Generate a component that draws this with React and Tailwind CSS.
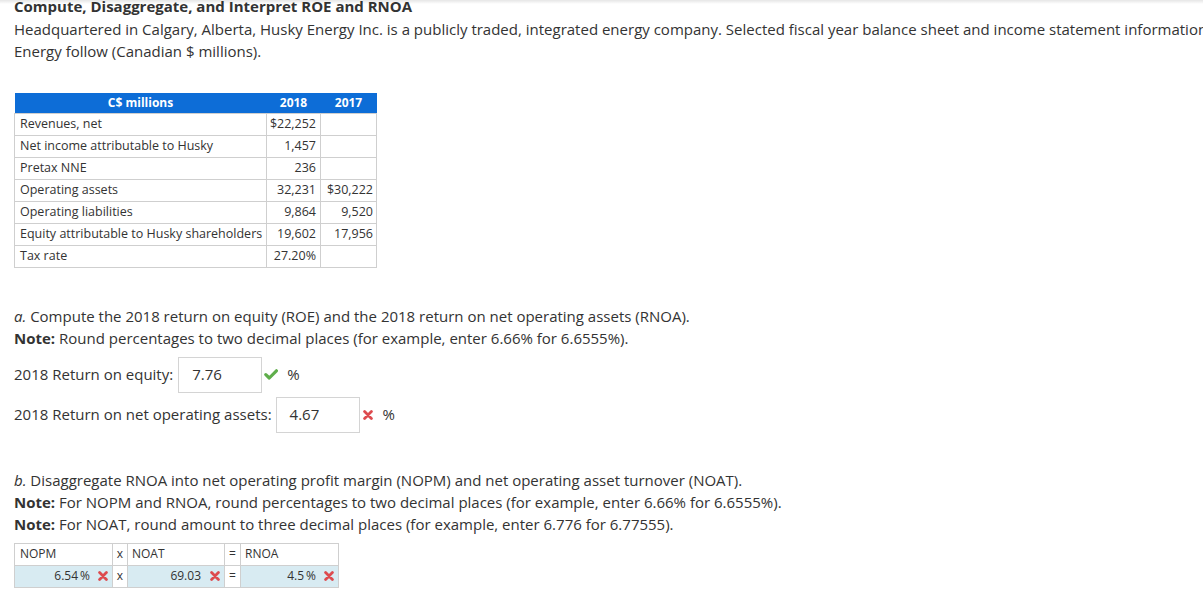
import React from 'react';

const CheckMark = () => (
    <svg width="14" height="11" viewBox="0 0 14 11" className="shrink-0">
        <polyline points="1.8,5.6 5.3,9 12.4,1.8" fill="none" stroke="#5fae4b" strokeWidth="3.2" strokeLinecap="round" strokeLinejoin="round" />
    </svg>
);

const Cross = () => (
    <svg width="10" height="10" viewBox="0 0 10 10" className="shrink-0">
        <path d="M1.6 1.6 L8.4 8.4 M8.4 1.6 L1.6 8.4" fill="none" stroke="#dd4b4f" strokeWidth="2.8" strokeLinecap="round" />
    </svg>
);

const rows = [
    ['Revenues, net', '$22,252', ''],
    ['Net income attributable to Husky', '1,457', ''],
    ['Pretax NNE', '236', ''],
    ['Operating assets', '32,231', '$30,222'],
    ['Operating liabilities', '9,864', '9,520'],
    ['Equity attributable to Husky shareholders', '19,602', '17,956'],
    ['Tax rate', '27.20%', ''],
];

const App = () => {
    return (
        <div className="relative w-full h-[589px] overflow-hidden bg-white text-[#333] font-['Open_Sans',sans-serif]">
            <div className="absolute top-0 left-0 right-0 h-[4px] bg-gradient-to-b from-black/10 to-transparent" />
            <div className="px-[14px]">
                <h1 className="-mt-[5px] text-[15px] leading-[22px] font-bold whitespace-nowrap">
                    Compute, Disaggregate, and Interpret ROE and RNOA
                </h1>
                <p className="mt-px text-[15px] leading-[22px] whitespace-nowrap">
                    Headquartered in Calgary, Alberta, Husky Energy Inc. is a publicly traded, integrated energy company. Selected fiscal year balance sheet and income statement information for Husky
                    <br />
                    Energy follow (Canadian $ millions).
                </p>

                <table className="mt-[31px] w-[362px] border-collapse text-[12.5px] table-fixed">
                    <colgroup>
                        <col className="w-[252px]" />
                        <col className="w-[54px]" />
                        <col className="w-[56px]" />
                    </colgroup>
                    <thead>
                        <tr className="h-[20px] bg-[#0d6dd7] text-white font-bold text-[12px]">
                            <th className="p-0 text-center">C$ millions</th>
                            <th className="p-0 text-center">2018</th>
                            <th className="p-0 text-center">2017</th>
                        </tr>
                    </thead>
                    <tbody>
                        {rows.map((r, i) => (
                            <tr key={i} className="h-[22px]">
                                <td className="border border-[#cfcfcf] pl-[5px] pt-px pb-0 whitespace-nowrap">{r[0]}</td>
                                <td className="border border-[#cfcfcf] pr-[4px] pt-px pb-0 text-right">{r[1]}</td>
                                <td className="border border-[#cfcfcf] pr-[3px] pt-px pb-0 text-right">{r[2]}</td>
                            </tr>
                        ))}
                    </tbody>
                </table>

                <div className="mt-[37px] text-[15px] leading-[22px]">
                    <p><i>a.</i> Compute the 2018 return on equity (ROE) and the 2018 return on net operating assets (RNOA).</p>
                    <p><b>Note:</b> Round percentages to two decimal places (for example, enter 6.66% for 6.6555%).</p>
                </div>

                <div className="mt-[8px] flex items-center text-[15px]">
                    <span>2018 Return on equity:</span>
                    <div className="ml-[5px] w-[84px] h-[36px] border border-[#d4d4d4] flex items-center pl-[13px]">7.76</div>
                    <span className="ml-[2px]"><CheckMark /></span>
                    <span className="ml-[9px]">%</span>
                </div>
                <div className="mt-[4px] flex items-center text-[15px]">
                    <span>2018 Return on net operating assets:</span>
                    <div className="ml-[4px] w-[84px] h-[36px] border border-[#d4d4d4] flex items-center pl-[13px]">4.67</div>
                    <span className="ml-[3px]"><Cross /></span>
                    <span className="ml-[10px]">%</span>
                </div>

                <div className="mt-[36px] text-[15px] leading-[22px]">
                    <p><i>b.</i> Disaggregate RNOA into net operating profit margin (NOPM) and net operating asset turnover (NOAT).</p>
                    <p><b>Note:</b> For NOPM and RNOA, round percentages to two decimal places (for example, enter 6.66% for 6.6555%).</p>
                    <p><b>Note:</b> For NOAT, round amount to three decimal places (for example, enter 6.776 for 6.77555).</p>
                </div>

                <table className="mt-[8px] w-[324px] border-collapse text-[12px] table-fixed">
                    <colgroup>
                        <col className="w-[98px]" />
                        <col className="w-[15px]" />
                        <col className="w-[97px]" />
                        <col className="w-[16px]" />
                        <col className="w-[98px]" />
                    </colgroup>
                    <tbody>
                        <tr className="h-[22px]">
                            <td className="border border-[#cfcfcf] pl-[5px] py-0">NOPM</td>
                            <td className="border border-[#cfcfcf] p-0 text-center">x</td>
                            <td className="border border-[#cfcfcf] pl-[4px] py-0">NOAT</td>
                            <td className="border border-[#cfcfcf] p-0 text-center">=</td>
                            <td className="border border-[#cfcfcf] pl-[4px] py-0">RNOA</td>
                        </tr>
                        <tr className="h-[22px]">
                            <td className="border border-[#cfcfcf] bg-[#d8ebf2] py-0 pr-[4px]">
                                <div className="flex items-center justify-end">
                                    <span>6.54</span>
                                    <span className="ml-[2px]">%</span>
                                    <span className="ml-[8px]"><Cross /></span>
                                </div>
                            </td>
                            <td className="border border-[#cfcfcf] p-0 text-center">x</td>
                            <td className="border border-[#cfcfcf] bg-[#d8ebf2] py-0 pr-[4px]">
                                <div className="flex items-center justify-end">
                                    <span>69.03</span>
                                    <span className="ml-[9px]"><Cross /></span>
                                </div>
                            </td>
                            <td className="border border-[#cfcfcf] p-0 text-center">=</td>
                            <td className="border border-[#cfcfcf] bg-[#d8ebf2] py-0 pr-[4px]">
                                <div className="flex items-center justify-end">
                                    <span>4.5</span>
                                    <span className="ml-[2px]">%</span>
                                    <span className="ml-[8px]"><Cross /></span>
                                </div>
                            </td>
                        </tr>
                    </tbody>
                </table>
            </div>
        </div>
    );
};

export default App;
